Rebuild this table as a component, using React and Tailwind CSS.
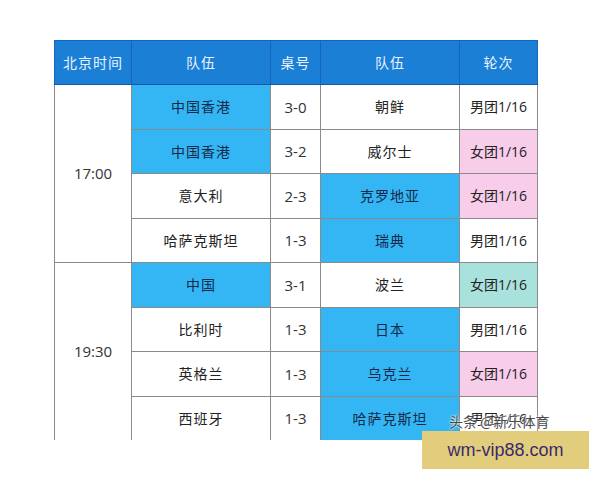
const rows = [
  { time: "17:00", span: 4, a: "中国香港", aHi: true, score: "3-0", b: "朝鲜", bHi: false, round: "男团1/16", tone: "white" },
  { a: "中国香港", aHi: true, score: "3-2", b: "威尔士", bHi: false, round: "女团1/16", tone: "pink" },
  { a: "意大利", aHi: false, score: "2-3", b: "克罗地亚", bHi: true, round: "女团1/16", tone: "pink" },
  { a: "哈萨克斯坦", aHi: false, score: "1-3", b: "瑞典", bHi: true, round: "男团1/16", tone: "white" },
  { time: "19:30", span: 4, a: "中国", aHi: true, score: "3-1", b: "波兰", bHi: false, round: "女团1/16", tone: "teal" },
  { a: "比利时", aHi: false, score: "1-3", b: "日本", bHi: true, round: "男团1/16", tone: "white" },
  { a: "英格兰", aHi: false, score: "1-3", b: "乌克兰", bHi: true, round: "女团1/16", tone: "pink" },
  { a: "西班牙", aHi: false, score: "1-3", b: "哈萨克斯坦", bHi: true, round: "男团1/16", tone: "white" },
];

const toneBg = {
  white: "bg-white",
  pink: "bg-[#f8cdea]",
  teal: "bg-[#a9e2dc]",
};

const cjk = "font-['Noto_Sans_CJK_SC',sans-serif]";
const num = "font-['Open_Sans','Noto_Sans_CJK_SC',sans-serif]";

function TeamCell({ name, hi }) {
  return (
    <td className={`border border-[#8a8a8a] text-center text-[14px] tracking-[1px] ${cjk} ${hi ? "bg-[#35b6f4] text-[#13294a]" : "bg-white text-[#222]"}`}>
      {name}
    </td>
  );
}

export default function App() {
  return (
    <div className="relative w-[600px] h-[480px] bg-white overflow-hidden">
      <div className="pt-[40px] pl-[54px]">
        <div className="h-[400px] overflow-hidden w-[486px]">
          <table className="border-collapse table-fixed w-[483px]">
            <colgroup>
              <col className="w-[77px]" />
              <col className="w-[139px]" />
              <col className="w-[50px]" />
              <col className="w-[139px]" />
              <col className="w-[78px]" />
            </colgroup>
            <thead>
              <tr className="h-[44px] bg-[#1b7fd6] text-[#eaf3ff]">
                {["北京时间", "队伍", "桌号", "队伍", "轮次"].map((h, i) => (
                  <th key={i} className={`border border-[#1566b8] border-b-[#0f5aa8] font-normal text-[14px] tracking-[1px] ${cjk}`}>
                    {h}
                  </th>
                ))}
              </tr>
            </thead>
            <tbody>
              {rows.map((r, i) => (
                <tr key={i} className="h-[44.5px]">
                  {r.time && (
                    <td rowSpan={r.span} className={`border border-[#8a8a8a] bg-white text-center text-[15px] text-[#333] ${num}`}>
                      {r.time}
                    </td>
                  )}
                  <TeamCell name={r.a} hi={r.aHi} />
                  <td className={`border border-[#8a8a8a] bg-white text-center text-[15px] text-[#333] ${num}`}>{r.score}</td>
                  <TeamCell name={r.b} hi={r.bHi} />
                  <td className={`border border-[#8a8a8a] text-center text-[14px] text-[#222] ${num} ${toneBg[r.tone]}`}>
                    {r.round}
                  </td>
                </tr>
              ))}
            </tbody>
          </table>
        </div>
      </div>

      <div className={`absolute left-[449px] top-[411px] text-[14px] text-[#4a4a4a] [text-shadow:0_0_2px_#fff,0_0_2px_#fff] ${cjk}`}>
        头条 @新乐体育
      </div>
      <div className="absolute left-[422px] top-[431px] w-[167px] h-[38px] bg-[#e1cd7c] flex items-center justify-center">
        <span className="text-[18px] text-[#3b2a6b] font-['Liberation_Sans',sans-serif]">wm-vip88.com</span>
      </div>
    </div>
  );
}
